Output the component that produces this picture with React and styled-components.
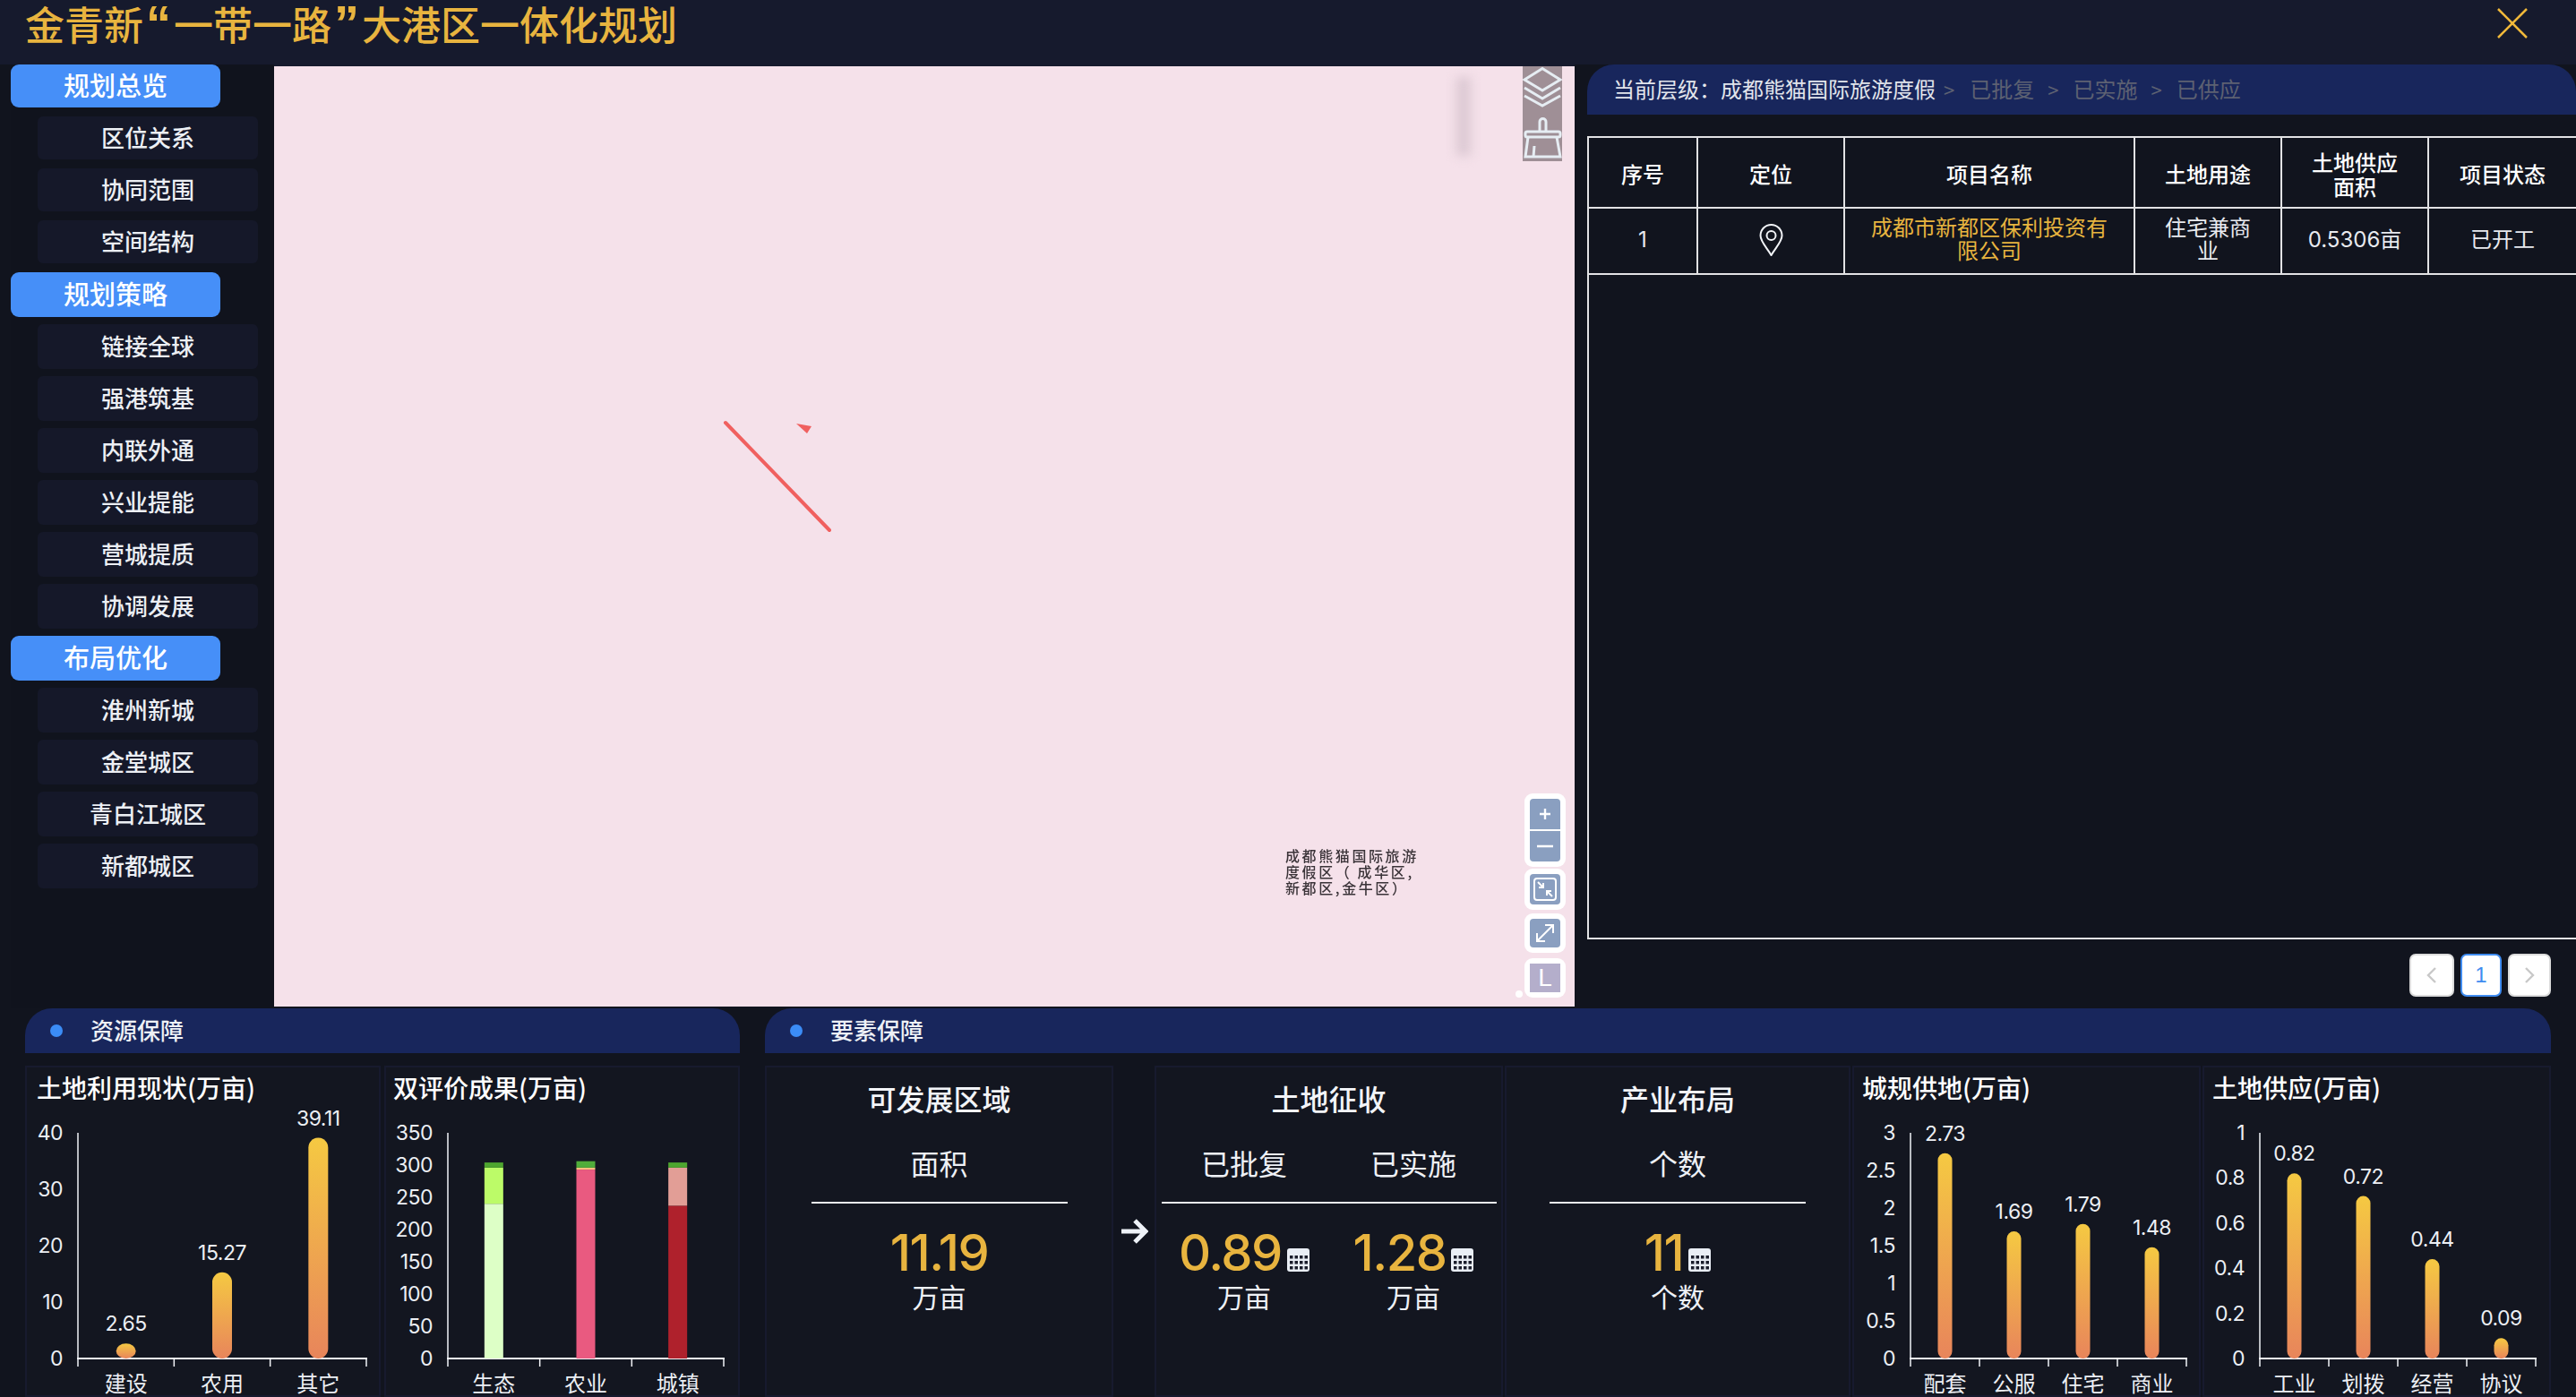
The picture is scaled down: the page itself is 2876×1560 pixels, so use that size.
import styled, { createGlobalStyle } from "styled-components";

const FONT = `"Noto Sans CJK SC", "Noto Sans", sans-serif`;
const NUM_FONT = `Inter, "Noto Sans CJK SC", sans-serif`;
const GOLD = "#e8b43f";
const NAVY = "#18265c";

const GlobalStyle = createGlobalStyle`
  html, body {
    margin: 0;
    padding: 0;
    background: #11141e;
    font-family: ${FONT};
    color: #eef1f6;
  }
  * { box-sizing: border-box; }
`;

const nav = [
  { head: "规划总览", items: ["区位关系", "协同范围", "空间结构"], compact: true },
  { head: "规划策略", items: ["链接全球", "强港筑基", "内联外通", "兴业提能", "营城提质", "协调发展"] },
  { head: "布局优化", items: ["淮州新城", "金堂城区", "青白江城区", "新都城区"] },
];

const PLOT_BOTTOM = 281;
const PLOT_HEIGHT = 252;

const Chart = ({ id, title, titlePad = 11, ticks, cats, values, stacks, axisX, axisW, barW }) => {
  const max = ticks[ticks.length - 1];
  const toY = (v) => PLOT_BOTTOM - (v / max) * PLOT_HEIGHT;
  const slot = axisW / cats.length;
  return (
    <ChartCard>
      <ChartTitle $pad={titlePad}>{title}</ChartTitle>
      <ChartSvg width="385" height="324">
        <defs>
          <linearGradient id={id} x1="0" y1="0" x2="0" y2="1">
            <stop offset="0" stopColor="#f5c942" />
            <stop offset="1" stopColor="#e8855b" />
          </linearGradient>
        </defs>
        {ticks.map((t) => (
          <AxisText key={t} x={axisX - 17} y={toY(t)} textAnchor="end" dominantBaseline="central">
            {t}
          </AxisText>
        ))}
        <line x1={axisX} y1={PLOT_BOTTOM - PLOT_HEIGHT} x2={axisX} y2={PLOT_BOTTOM} stroke="#f2f4f8" strokeWidth="1.5" />
        <line x1={axisX - 1} y1={PLOT_BOTTOM} x2={axisX + axisW + 1} y2={PLOT_BOTTOM} stroke="#f2f4f8" strokeWidth="2" />
        {cats.map((c, i) => {
          const cx = axisX + slot * (i + 0.5);
          return (
            <g key={c}>
              {values && (
                <>
                  <rect
                    x={cx - barW / 2}
                    y={toY(values[i])}
                    width={barW}
                    height={PLOT_BOTTOM - toY(values[i])}
                    rx={barW / 2}
                    fill={`url(#${id})`}
                  />
                  <AxisText x={cx} y={toY(values[i]) - 22} textAnchor="middle" dominantBaseline="central">
                    {values[i]}
                  </AxisText>
                </>
              )}
              {stacks &&
                stacks[i].reduce(
                  (acc, [v, color], k) => {
                    const y0 = toY(acc.sum + v);
                    acc.nodes.push(
                      <rect key={k} x={cx - barW / 2} y={y0} width={barW} height={toY(acc.sum) - y0} fill={color} />
                    );
                    acc.sum += v;
                    return acc;
                  },
                  { sum: 0, nodes: [] }
                ).nodes}
              <CatText x={cx} y={307} textAnchor="middle" dominantBaseline="central">
                {c}
              </CatText>
            </g>
          );
        })}
        {cats.map((_, i) => (
          <line key={i} x1={axisX + slot * i} y1={PLOT_BOTTOM} x2={axisX + slot * i} y2={PLOT_BOTTOM + 9} stroke="#f2f4f8" strokeWidth="1.5" />
        ))}
        <line x1={axisX + axisW} y1={PLOT_BOTTOM} x2={axisX + axisW} y2={PLOT_BOTTOM + 9} stroke="#f2f4f8" strokeWidth="1.5" />
      </ChartSvg>
    </ChartCard>
  );
};

const GridIcon = () => (
  <GridSvg width="25" height="26" viewBox="0 0 25 26">
    <rect x="0" y="0" width="25" height="26" rx="3" fill="#e9eef5" />
    {[8, 14, 20].map((y) =>
      [3, 8.5, 14, 19.5].map((x) => <rect key={`${x}-${y}`} x={x} y={y} width="3.5" height="3.5" fill="#1a1d2b" />)
    )}
  </GridSvg>
);

const Kpi = ({ title, metrics, ruleW, cardW }) => (
  <KpiCard $w={cardW}>
    <KpiTitle>{title}</KpiTitle>
    <KpiRow $cols={metrics.length}>
      {metrics.map((m) => (
        <KpiText key={m.label}>{m.label}</KpiText>
      ))}
    </KpiRow>
    <KpiRule $w={ruleW} />
    <KpiRow $cols={metrics.length}>
      {metrics.map((m) => (
        <KpiValue key={m.label}>
          <KpiNumber>{m.value}</KpiNumber>
          {m.icon && <GridIcon />}
        </KpiValue>
      ))}
    </KpiRow>
    <KpiRow $cols={metrics.length}>
      {metrics.map((m) => (
        <KpiUnit key={m.label}>{m.unit}</KpiUnit>
      ))}
    </KpiRow>
  </KpiCard>
);

export default function App() {
  return (
    <Page>
      <GlobalStyle />
      <Header>
        <Title>
          金青新<Quote>“</Quote>一带一路<Quote>”</Quote>大港区一体化规划
        </Title>
        <svg width="34" height="34" viewBox="0 0 34 34">
          <path d="M1 1 L33 33 M33 1 L1 33" stroke="#f0b83a" strokeWidth="2.5" fill="none" />
        </svg>
      </Header>
      <Main>
        <Sidebar>
          {nav.map((g) => (
            <NavGroup key={g.head} $compact={g.compact}>
              <NavHead $compact={g.compact}>{g.head}</NavHead>
              {g.items.map((it) => (
                <NavItem key={it} $compact={g.compact}>
                  {it}
                </NavItem>
              ))}
            </NavGroup>
          ))}
        </Sidebar>
        <MapCell>
          <MapCanvas>
            <MapStreak />
            <MapDrawing width="1452" height="1050">
              <line x1="504" y1="398" x2="620" y2="518" stroke="#f0605f" strokeWidth="4" strokeLinecap="round" />
              <polygon points="583,399 600,402 595,410" fill="#f0605f" />
            </MapDrawing>
            <ToolStrip>
              <svg width="44" height="106" viewBox="0 0 44 106" fill="none" stroke="#e6edf3" strokeWidth="3">
                <path d="M22 2.5 L42 15 L22 27 L2 15 Z" />
                <path d="M2 24 L22 36 L42 24" />
                <path d="M2 33 L22 44 L42 33" />
                <path d="M19 73 V62 a3.5 3.5 0 0 1 7 0 V73" />
                <rect x="3" y="73" width="39" height="6" rx="2" />
                <path d="M6 79 L3 101 H42 L38 79" />
                <path d="M13 89 L12 101" />
              </svg>
            </ToolStrip>
            <MapLabel>
              成都熊猫国际旅游
              <br />
              度假区（ 成华区,
              <br />
              新都区,金牛区）
            </MapLabel>
            <Controls>
              <ControlBox>
                <ZoomInner>
                  <ZoomButton>
                    <svg width="14" height="14" viewBox="0 0 14 14">
                      <path d="M7 1 V13 M1 7 H13" stroke="#fff" strokeWidth="2.4" />
                    </svg>
                  </ZoomButton>
                  <ZoomButton>
                    <svg width="18" height="4" viewBox="0 0 18 4">
                      <path d="M0 2 H18" stroke="#fff" strokeWidth="2.4" />
                    </svg>
                  </ZoomButton>
                </ZoomInner>
              </ControlBox>
              <ControlBox $mt={2}>
                <ControlInner $h={34}>
                  <svg width="26" height="26" viewBox="0 0 26 26" fill="none" stroke="#fff" strokeWidth="2">
                    <rect x="1" y="1" width="24" height="24" rx="3" />
                    <path d="M5 5 L11 11 M11 6 V11 H6" />
                    <path d="M21 21 L15 15 M15 20 V15 H20" />
                  </svg>
                </ControlInner>
              </ControlBox>
              <ControlBox $mt={4}>
                <ControlInner $h={32}>
                  <svg width="22" height="22" viewBox="0 0 22 22" fill="none" stroke="#fff" strokeWidth="2">
                    <path d="M2 20 L20 2 M11 2 H20 V11 M2 11 V20 H11" />
                  </svg>
                </ControlInner>
              </ControlBox>
              <ControlBox $mt={6} $shift={2}>
                <ControlInner $h={32} $lilac>
                  L
                </ControlInner>
              </ControlBox>
            </Controls>
            <MapDot />
          </MapCanvas>
        </MapCell>
        <RightPanel>
          <Crumbs>
            <span>当前层级：成都熊猫国际旅游度假</span>
            <CrumbSep $first>&gt;</CrumbSep>
            <CrumbMuted>已批复</CrumbMuted>
            <CrumbSep>&gt;</CrumbSep>
            <CrumbMuted>已实施</CrumbMuted>
            <CrumbSep>&gt;</CrumbSep>
            <CrumbMuted>已供应</CrumbMuted>
          </Crumbs>
          <TableBox>
            <Table>
              <thead>
                <tr>
                  <Th $w={121}>序号</Th>
                  <Th $w={164}>定位</Th>
                  <Th $w={324}>项目名称</Th>
                  <Th $w={164}>土地用途</Th>
                  <Th $w={164}>
                    土地供应
                    <br />
                    面积
                  </Th>
                  <Th>项目状态</Th>
                </tr>
              </thead>
              <tbody>
                <tr>
                  <Td>1</Td>
                  <Td>
                    <PinIcon width="27" height="36" viewBox="0 0 27 36" fill="none" stroke="#f2f4f8" strokeWidth="2">
                      <path d="M13.5 35 C9 27 1.5 20 1.5 13 a12 12 0 0 1 24 0 C25.5 20 18 27 13.5 35 Z" />
                      <circle cx="13.5" cy="13" r="5" />
                    </PinIcon>
                  </Td>
                  <Td $gold>成都市新都区保利投资有限公司</Td>
                  <Td>住宅兼商业</Td>
                  <Td>0.5306亩</Td>
                  <Td>已开工</Td>
                </tr>
              </tbody>
            </Table>
          </TableBox>
          <Pager>
            <PageButton $w={50}>
              <svg width="14" height="20" viewBox="0 0 14 20" fill="none" stroke="#c8c8c8" strokeWidth="2.4">
                <path d="M11 2 L3 10 L11 18" />
              </svg>
            </PageButton>
            <PageButton $w={46} $active>
              1
            </PageButton>
            <PageButton $w={48}>
              <svg width="14" height="20" viewBox="0 0 14 20" fill="none" stroke="#c8c8c8" strokeWidth="2.4">
                <path d="M3 2 L11 10 L3 18" />
              </svg>
            </PageButton>
          </Pager>
        </RightPanel>
      </Main>
      <Bottom>
        <Section $w={798}>
          <SectionHead>
            <SectionDot />
            <SectionName>资源保障</SectionName>
          </SectionHead>
          <Cards $gap={4}>
            <Chart
              id="g1"
              title="土地利用现状(万亩)"
              ticks={[0, 10, 20, 30, 40]}
              cats={["建设", "农用", "其它"]}
              values={[2.65, 15.27, 39.11]}
              axisX={57}
              axisW={322}
              barW={22}
            />
            <Chart
              id="g2"
              title="双评价成果(万亩)"
              titlePad={8}
              ticks={[0, 50, 100, 150, 200, 250, 300, 350]}
              cats={["生态", "农业", "城镇"]}
              stacks={[
                [[240, "#ddffc6"], [56, "#bcfb68"], [8, "#4ea52f"]],
                [[293, "#e95a80"], [3, "#f6c07d"], [10, "#50ad3a"]],
                [[237, "#af212c"], [59, "#e29e96"], [8, "#4ea52f"]],
              ]}
              axisX={69}
              axisW={308}
              barW={21}
            />
          </Cards>
        </Section>
        <Section $w={1994}>
          <SectionHead>
            <SectionDot />
            <SectionName>要素保障</SectionName>
          </SectionHead>
          <Cards $gap={2}>
            <Kpi
              title="可发展区域"
              cardW={389}
              ruleW={286}
              metrics={[{ label: "面积", value: "11.19", unit: "万亩" }]}
            />
            <ArrowSlot>
              <svg width="32" height="28" viewBox="0 0 32 28" fill="none" stroke="#eef2f8" strokeWidth="5">
                <path d="M2 14 H27 M17 2 L29 14 L17 26" />
              </svg>
            </ArrowSlot>
            <Kpi
              title="土地征收"
              cardW={389}
              ruleW={374}
              metrics={[
                { label: "已批复", value: "0.89", unit: "万亩", icon: true },
                { label: "已实施", value: "1.28", unit: "万亩", icon: true },
              ]}
            />
            <Kpi
              title="产业布局"
              cardW={386}
              ruleW={286}
              metrics={[{ label: "个数", value: "11", unit: "个数", icon: true }]}
            />
            <Chart
              id="g3"
              title="城规供地(万亩)"
              titlePad={9}
              ticks={[0, 0.5, 1, 1.5, 2, 2.5, 3]}
              cats={["配套", "公服", "住宅", "商业"]}
              values={[2.73, 1.69, 1.79, 1.48]}
              axisX={63}
              axisW={308}
              barW={16}
            />
            <Chart
              id="g4"
              title="土地供应(万亩)"
              titlePad={9}
              ticks={[0, 0.2, 0.4, 0.6, 0.8, 1]}
              cats={["工业", "划拨", "经营", "协议"]}
              values={[0.82, 0.72, 0.44, 0.09]}
              axisX={62}
              axisW={308}
              barW={16}
            />
          </Cards>
        </Section>
      </Bottom>
    </Page>
  );
}

const Page = styled.div`
  width: 2876px;
  height: 1560px;
  overflow: hidden;
  background: #11141e;
`;

const Header = styled.header`
  height: 72px;
  padding: 0 54px 20px 28px;
  display: flex;
  align-items: center;
  justify-content: space-between;
  background: #161a2d;
`;

const Title = styled.h1`
  margin: 0;
  font-size: 44px;
  line-height: 52px;
  font-weight: 500;
  color: ${GOLD};
`;

const Quote = styled.span`
  margin: 0 3px;
  font-family: "Liberation Sans", sans-serif;
  font-size: 56px;
  line-height: 0;
  font-weight: 700;
`;

const Main = styled.div`
  display: flex;
  height: 1054px;
`;

const Sidebar = styled.nav`
  width: 294px;
  margin-left: 12px;
  display: flex;
  flex-direction: column;
  gap: 8px;
  background: #10131d;
`;

const NavGroup = styled.div`
  display: flex;
  flex-direction: column;
  gap: ${({ $compact }) => ($compact ? 10 : 8)}px;
  margin-bottom: ${({ $compact }) => ($compact ? 2 : 0)}px;
`;

const NavHead = styled.div`
  width: 234px;
  height: ${({ $compact }) => ($compact ? 48 : 50)}px;
  padding-bottom: 4px;
  display: flex;
  align-items: center;
  justify-content: center;
  background: #468ff8;
  border-radius: 9px;
  font-size: 29px;
  font-weight: 500;
  color: #fff;
`;

const NavItem = styled.div`
  width: 246px;
  height: ${({ $compact }) => ($compact ? 48 : 50)}px;
  margin-left: 30px;
  padding-bottom: 4px;
  display: flex;
  align-items: center;
  justify-content: center;
  background: #151829;
  border-radius: 6px;
  font-size: 26px;
  font-weight: 500;
  color: #eceff4;
`;

const MapCell = styled.div`
  width: 1452px;
  padding: 2px 0;
  background: linear-gradient(#161a2d 2px, #11141e 2px);
`;

const MapCanvas = styled.div`
  position: relative;
  height: 100%;
  overflow: hidden;
  background: #f5e1ea;
`;

const MapStreak = styled.div`
  position: absolute;
  left: 1320px;
  top: 12px;
  width: 16px;
  height: 88px;
  background: #dcc9d3;
  filter: blur(6px);
`;

const MapDrawing = styled.svg`
  position: absolute;
  left: 0;
  top: 0;
`;

const ToolStrip = styled.div`
  position: absolute;
  left: 1394px;
  top: 0;
  width: 44px;
  height: 106px;
  background: #9f8f96;
`;

const MapLabel = styled.div`
  position: absolute;
  left: 1129px;
  top: 872px;
  font-size: 16px;
  line-height: 18px;
  letter-spacing: 2.6px;
  font-weight: 500;
  white-space: nowrap;
  color: #3a3338;
  filter: blur(0.3px);
`;

const Controls = styled.div`
  position: absolute;
  right: 10px;
  top: 812px;
  display: flex;
  flex-direction: column;
`;

const ControlBox = styled.div`
  width: 46px;
  padding: 6px;
  background: #fff;
  border-radius: 9px;
  margin-top: ${({ $mt }) => $mt || 0}px;
  margin-right: ${({ $shift }) => -($shift || 0)}px;
`;

const ZoomInner = styled.div`
  display: flex;
  flex-direction: column;
  gap: 2px;
  border-radius: 4px;
  overflow: hidden;
`;

const ZoomButton = styled.div`
  height: 34px;
  display: flex;
  align-items: center;
  justify-content: center;
  background: #8a9fc0;
`;

const ControlInner = styled.div`
  height: ${({ $h }) => $h}px;
  display: flex;
  align-items: center;
  justify-content: center;
  background: ${({ $lilac }) => ($lilac ? "#b4aecb" : "#8a9fc0")};
  border-radius: ${({ $lilac }) => ($lilac ? "0" : "4px")};
  color: #fff;
  font-family: "Liberation Sans", sans-serif;
  font-size: 28px;
`;

const MapDot = styled.div`
  position: absolute;
  left: 1386px;
  top: 1032px;
  width: 8px;
  height: 8px;
  border-radius: 50%;
  background: #fff;
`;

const RightPanel = styled.section`
  width: 1104px;
  margin-left: 14px;
`;

const Crumbs = styled.div`
  height: 56px;
  padding: 0 0 3px 29px;
  display: flex;
  align-items: center;
  background: ${NAVY};
  border-radius: 30px 30px 0 0;
  font-size: 24px;
  color: #e2e5ec;
`;

const CrumbMuted = styled.span`
  color: #5d6172;
`;

const CrumbSep = styled.span`
  margin: ${({ $first }) => ($first ? "0 17px 0 9px" : "0 16px 0 15px")};
  color: #5d6172;
  font-size: 22px;
`;

const TableBox = styled.div`
  height: 897px;
  width: 1106px;
  margin-top: 24px;
  border: 2px solid #e2e2e4;
  background: #11141e;
`;

const Table = styled.table`
  width: 100%;
  table-layout: fixed;
  border-collapse: collapse;
`;

const Th = styled.th`
  width: ${({ $w }) => ($w ? `${$w}px` : "auto")};
  height: 78px;
  padding: 2px 0 0;
  border: 2px solid #e2e2e4;
  border-top: 0;
  font-size: 24px;
  line-height: 27px;
  font-weight: 500;
  color: #fff;
  &:first-child { border-left: 0; }
  &:last-child { border-right: 0; }
`;

const Td = styled.td`
  height: 74px;
  padding: 0 24px 2px;
  border: 2px solid #e2e2e4;
  font-family: ${NUM_FONT};
  font-size: 24px;
  line-height: 26px;
  text-align: center;
  color: ${({ $gold }) => ($gold ? GOLD : "#e8eaef")};
  &:first-child { border-left: 0; }
  &:last-child { border-right: 0; }
`;

const PinIcon = styled.svg`
  display: block;
  margin: 0 auto;
`;

const Pager = styled.div`
  display: flex;
  justify-content: flex-end;
  gap: 7px;
  margin-top: 16px;
  padding-right: 28px;
`;

const PageButton = styled.div`
  width: ${({ $w }) => $w}px;
  height: 48px;
  display: flex;
  align-items: center;
  justify-content: center;
  background: #fff;
  border: 2px solid ${({ $active }) => ($active ? "#3f8cf0" : "#dcdcdc")};
  border-radius: 7px;
  font-family: "Liberation Sans", sans-serif;
  font-size: 24px;
  color: #3f8cf0;
`;

const Bottom = styled.div`
  display: flex;
  gap: 28px;
  padding-left: 28px;
`;

const Section = styled.section`
  width: ${({ $w }) => $w}px;
`;

const SectionHead = styled.div`
  height: 50px;
  padding: 0 0 0 28px;
  display: flex;
  align-items: center;
  background: ${NAVY};
  border-radius: 30px 30px 0 0;
`;

const SectionDot = styled.span`
  width: 14px;
  height: 14px;
  border-radius: 50%;
  background: #3b8cf6;
`;

const SectionName = styled.span`
  margin: -4px 0 0 31px;
  font-size: 26px;
  font-weight: 500;
  color: #eef1f6;
`;

const Cards = styled.div`
  display: flex;
  gap: ${({ $gap }) => $gap}px;
  margin-top: 14px;
  height: 370px;
`;

const ChartCard = styled.div`
  flex: 1 1 0;
  min-width: 0;
  padding-top: 4px;
  border: 2px solid #171a2e;
  background: #131620;
`;

const ChartTitle = styled.div`
  height: 40px;
  margin-top: -2px;
  margin-bottom: 2px;
  padding-left: ${({ $pad }) => $pad}px;
  font-size: 28px;
  line-height: 40px;
  font-weight: 500;
  color: #fff;
`;

const ChartSvg = styled.svg`
  display: block;
  overflow: visible;
`;

const AxisText = styled.text`
  font-family: ${NUM_FONT};
  font-size: 23px;
  letter-spacing: -0.5px;
  fill: #eceff4;
`;

const CatText = styled.text`
  font-family: ${FONT};
  font-size: 24px;
  fill: #eceff4;
`;

const KpiCard = styled.div`
  flex: 0 0 ${({ $w }) => $w}px;
  padding-top: 14px;
  border: 2px solid #171a2e;
  background: #131620;
  display: flex;
  flex-direction: column;
  align-items: center;
`;

const KpiTitle = styled.div`
  font-size: 32px;
  line-height: 40px;
  font-weight: 500;
  color: #f2f4f8;
`;

const KpiRow = styled.div`
  display: grid;
  grid-template-columns: repeat(${({ $cols }) => $cols}, 189px);
  justify-items: center;
  justify-content: center;
`;

const KpiText = styled.div`
  margin-top: 32px;
  font-size: 32px;
  line-height: 40px;
  color: #eef1f6;
`;

const KpiRule = styled.div`
  width: ${({ $w }) => $w}px;
  height: 2px;
  margin: 24px 0 -2px;
  background: #eceef2;
`;

const KpiValue = styled.div`
  margin-top: 24px;
  height: 60px;
  display: flex;
  align-items: flex-end;
  gap: 6px;
`;

const KpiNumber = styled.span`
  margin-bottom: -3px;
  font-family: ${NUM_FONT};
  font-size: 56px;
  line-height: 60px;
  font-weight: 500;
  letter-spacing: -1.5px;
  color: ${GOLD};
`;

const GridSvg = styled.svg`
  margin-bottom: 6px;
`;

const KpiUnit = styled.div`
  margin-top: 1px;
  font-size: 30px;
  line-height: 40px;
  color: #eef1f6;
`;

const ArrowSlot = styled.div`
  flex: 0 0 42px;
  padding-top: 171px;
  display: flex;
  justify-content: center;
  align-items: flex-start;
`;
